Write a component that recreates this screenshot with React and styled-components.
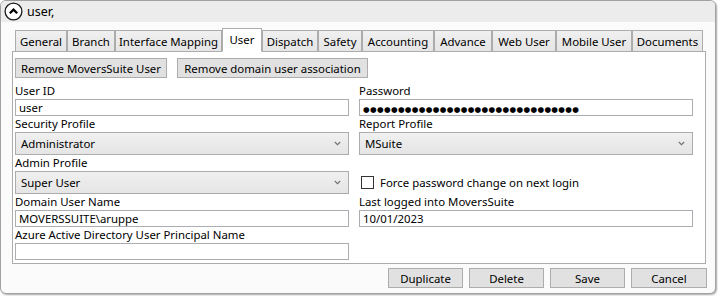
import React from "react";
import styled, { createGlobalStyle } from "styled-components";

const Global = createGlobalStyle`
  html, body { margin: 0; padding: 0; background: #ffffff; }
  body {
    font-family: "Noto Sans", "Open Sans", sans-serif;
    font-size: 11.4px;
    color: #000;
  }
  #root { width: 718px; height: 296px; }
  * { box-sizing: border-box; }
`;

const Frame = styled.div`
  width: 716px;
  height: 294px;
  border: 1px solid #a2a2a2;
  border-radius: 6px;
  box-shadow: 1px 1px 2px rgba(0, 0, 0, 0.35);
  background: #fbfbfb;
  overflow: hidden;
  display: flex;
  flex-direction: column;
`;

const Header = styled.div`
  height: 21px;
  display: flex;
  align-items: center;
  gap: 4px;
  padding-left: 3px;
  background: #ececec;
  font-size: 12.5px;
`;

const Body = styled.div`
  flex: 1;
  display: flex;
  flex-direction: column;
  padding: 6px 0 0 11px;
`;

const TabStrip = styled.div`
  display: flex;
  align-items: flex-end;
  height: 24px;
  padding-left: 3px;
  margin-bottom: -1px;
  position: relative;
  z-index: 1;
`;

const Tab = styled.div`
  width: ${(p) => p.$w}px;
  height: ${(p) => (p.$active ? 24 : 22)}px;
  display: flex;
  align-items: center;
  justify-content: center;
  padding-bottom: ${(p) => (p.$active ? 2 : 0)}px;
  border: 1px solid #acacac;
  border-bottom: ${(p) => (p.$active ? "1px solid #ffffff" : "1px solid #acacac")};
  background: ${(p) =>
    p.$active ? "#ffffff" : "linear-gradient(#f0f0f0, #e5e5e5)"};
  white-space: nowrap;
`;

const Panel = styled.div`
  width: 694px;
  height: 213px;
  border: 1px solid #acacac;
  background: #ffffff;
  padding: 6px 11px 0 2px;
  display: flex;
  flex-direction: column;
`;

const Toolbar = styled.div`
  display: flex;
  gap: 10px;
`;

const Button = styled.button`
  width: ${(p) => p.$w}px;
  height: 20px;
  padding: 0;
  font: inherit;
  color: #000;
  background: #e1e1e1;
  border: 1px solid #adadad;
  border-radius: 0;
`;

const Grid = styled.div`
  margin-top: 5px;
  display: grid;
  grid-template-columns: 334px 334px;
  column-gap: 10px;
`;

const Field = styled.div`
  display: flex;
  flex-direction: column;
  justify-content: flex-end;
`;

const Label = styled.div`
  height: 16px;
  line-height: 16px;
  white-space: nowrap;
`;

const TextBox = styled.div`
  height: 17px;
  border: 1px solid #abadb3;
  background: #fff;
  padding-left: 3px;
  line-height: 15px;
  white-space: nowrap;
`;

const Dots = styled.span`
  font-family: "DejaVu Sans", sans-serif;
  font-size: 7.6px;
  letter-spacing: 0.35px;
  line-height: 15px;
`;

const Select = styled.div`
  height: 23px;
  border: 1px solid #acacac;
  background: linear-gradient(#f0f0f0, #e5e5e5);
  display: flex;
  align-items: center;
  justify-content: space-between;
  padding: 0 7px 0 5px;
`;

const CheckRow = styled.label`
  height: 23px;
  display: flex;
  align-items: center;
  gap: 6px;
  padding-left: 2px;
`;

const Box = styled.span`
  width: 13px;
  height: 13px;
  border: 1px solid #333333;
  background: #fff;
`;

const Footer = styled.div`
  display: flex;
  justify-content: flex-end;
  gap: 6px;
  padding-right: 8px;
  margin-top: 4px;
`;

const Arrow = () => (
  <svg width="7" height="5" viewBox="0 0 7 5">
    <path d="M0.8 1 L3.5 3.7 L6.2 1" fill="none" stroke="#707070" strokeWidth="1.1" />
  </svg>
);

const Collapse = () => (
  <svg width="19" height="19" viewBox="0 0 19 19">
    <circle cx="9.5" cy="9.5" r="8.4" fill="#fff" stroke="#1a1a1a" strokeWidth="1.3" />
    <path d="M5.8 11.3 L9.5 7.6 L13.2 11.3" fill="none" stroke="#000" strokeWidth="2.2" />
  </svg>
);

const tabs = [
  ["General", 52],
  ["Branch", 48],
  ["Interface Mapping", 107],
  ["User", 40],
  ["Dispatch", 56],
  ["Safety", 44],
  ["Accounting", 72],
  ["Advance", 58],
  ["Web User", 64],
  ["Mobile User", 76],
  ["Documents", 71],
];

export default function App() {
  return (
    <>
      <Global />
      <Frame>
        <Header>
          <Collapse />
          <span>user,</span>
        </Header>
        <Body>
          <TabStrip>
            {tabs.map(([t, w]) => (
              <Tab key={t} $w={w} $active={t === "User"}>
                {t}
              </Tab>
            ))}
          </TabStrip>
          <Panel>
            <Toolbar>
              <Button $w={152}>Remove MoversSuite User</Button>
              <Button $w={191}>Remove domain user association</Button>
            </Toolbar>
            <Grid>
              <Field>
                <Label>User ID</Label>
                <TextBox>user</TextBox>
              </Field>
              <Field>
                <Label>Password</Label>
                <TextBox>
                  <Dots>{"●".repeat(31)}</Dots>
                </TextBox>
              </Field>
              <Field>
                <Label>Security Profile</Label>
                <Select>
                  <span>Administrator</span>
                  <Arrow />
                </Select>
              </Field>
              <Field>
                <Label>Report Profile</Label>
                <Select>
                  <span>MSuite</span>
                  <Arrow />
                </Select>
              </Field>
              <Field>
                <Label>Admin Profile</Label>
                <Select>
                  <span>Super User</span>
                  <Arrow />
                </Select>
              </Field>
              <Field>
                <CheckRow>
                  <Box />
                  <span>Force password change on next login</span>
                </CheckRow>
              </Field>
              <Field>
                <Label>Domain User Name</Label>
                <TextBox>MOVERSSUITE\aruppe</TextBox>
              </Field>
              <Field>
                <Label>Last logged into MoversSuite</Label>
                <TextBox>10/01/2023</TextBox>
              </Field>
              <Field>
                <Label>Azure Active Directory User Principal Name</Label>
                <TextBox />
              </Field>
            </Grid>
          </Panel>
          <Footer>
            <Button $w={75}>Duplicate</Button>
            <Button $w={75}>Delete</Button>
            <Button $w={75}>Save</Button>
            <Button $w={76}>Cancel</Button>
          </Footer>
        </Body>
      </Frame>
    </>
  );
}
